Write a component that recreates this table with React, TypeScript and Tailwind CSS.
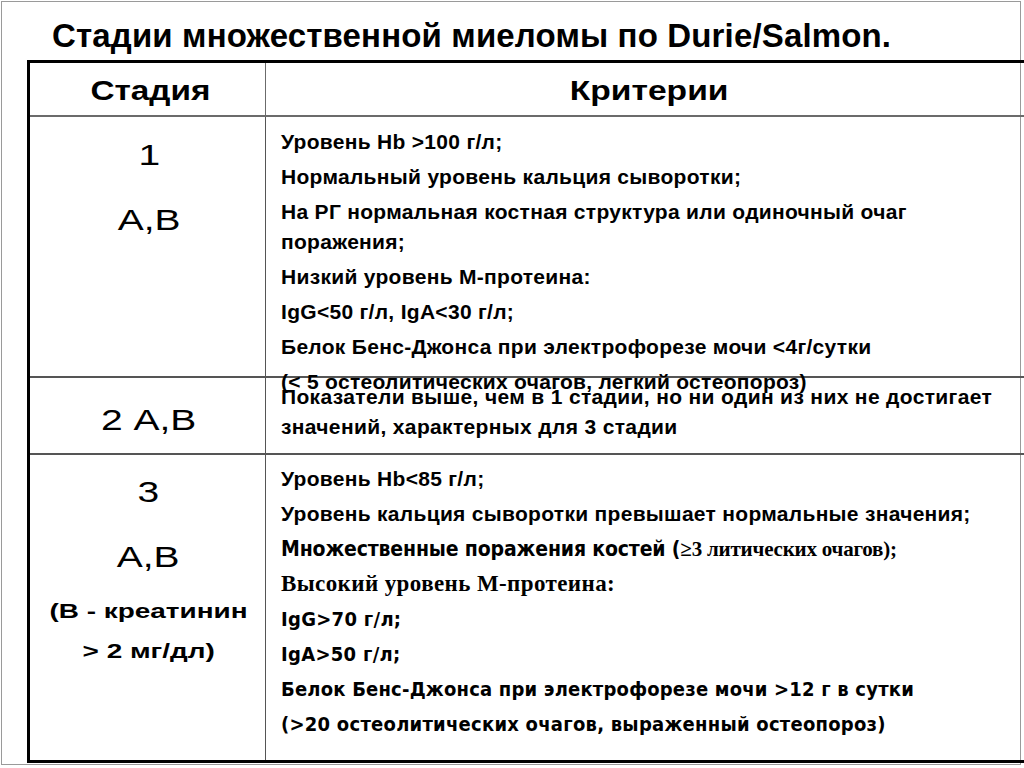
const sans = "font-['Liberation_Sans',Arial,sans-serif]";
const serif = "font-['Liberation_Serif','Times_New_Roman',serif]";
const narrow = "font-['Liberation_Sans_Narrow','Arial_Narrow','DejaVu_Sans_Condensed',sans-serif]";

// default criteria text: bold Arial-like, slightly widened
const base = "text-[21px] tracking-[0.3px]";

const Line = ({ children, type = base }: { children: React.ReactNode; type?: string }) => (
  <p className={`leading-[30px] font-bold text-black mb-[5px] ${type}`}>{children}</p>
);

export default function App() {
  return (
    <div className={`w-[1024px] h-[768px] bg-white overflow-hidden ${sans}`}>
      <div className="ml-[1px] mt-[1px] w-[1020px] h-[764px] border border-[#9a9a9a]">
        <h1 className="pl-[50px] pt-[17px] h-[58px] text-[33px] leading-none tracking-[0.15px] font-bold text-black">
          Стадии множественной миеломы по Durie/Salmon.
        </h1>
        <div className="ml-[25px] w-[998px] border-l-[3px] border-t-[3px] border-b-[3px] border-black grid grid-cols-[236px_1fr] grid-rows-[54px_261px_77px_305px]">
          {/* header */}
          <div className="border-r border-b-2 border-[#6b6b6b] flex items-center justify-center pt-[4px] pl-[6px]">
            <span className="text-[28px] font-bold scale-x-[1.19]">Стадия</span>
          </div>
          <div className="border-b-2 border-[#6b6b6b] flex items-center justify-center pt-[4px] pl-[8px]">
            <span className="text-[28px] font-bold scale-x-[1.2]">Критерии</span>
          </div>

          {/* stage 1 */}
          <div className="border-r border-b-2 border-[#555] flex flex-col items-center pt-[5px] text-[30px] leading-[65px] pl-[4px]">
            <span className="scale-x-[1.3]">1</span>
            <span className="scale-x-[1.3]">А,В</span>
          </div>
          <div className="border-b-2 border-[#555] pl-[15px] pt-[10px] h-[261px] relative z-10">
            <div className="w-[726px]">
              <Line>Уровень Hb &gt;100 г/л;</Line>
              <Line>Нормальный уровень кальция сыворотки;</Line>
              <Line>На РГ нормальная костная структура или одиночный очаг поражения;</Line>
              <Line>Низкий уровень М-протеина:</Line>
              <Line>IgG&lt;50 г/л, IgA&lt;30 г/л;</Line>
              <Line>Белок Бенс-Джонса при электрофорезе мочи &lt;4г/сутки</Line>
              <Line>(&lt; 5 остеолитических очагов, легкий остеопороз)</Line>
            </div>
          </div>

          {/* stage 2 */}
          <div className="border-r border-b-2 border-[#555] flex items-center justify-center pt-[8px] pl-[2px]">
            <span className="text-[30px] scale-x-[1.3]">2 А,В</span>
          </div>
          <div className="border-b-2 border-[#555] pl-[15px] pt-[4px]">
            <p className="text-[21px] leading-[30px] tracking-[0.35px] font-bold w-[726px]">
              Показатели выше, чем в 1 стадии, но ни один из них не достигает значений, характерных для 3 стадии
            </p>
          </div>

          {/* stage 3 */}
          <div className="border-r border-[#555] flex flex-col items-center pt-[4px] pl-[2px]">
            <span className="text-[30px] leading-[65px] scale-x-[1.3]">3</span>
            <span className="text-[30px] leading-[65px] scale-x-[1.3]">А,В</span>
            <span className="text-[21px] leading-[44px] font-bold scale-x-[1.33]">(В - креатинин</span>
            <span className="text-[21px] leading-[36px] font-bold scale-x-[1.33]">&gt; 2 мг/дл)</span>
          </div>
          <div className="pl-[15px] pt-[9px]">
            <Line>Уровень Hb&lt;85 г/л;</Line>
            <Line>Уровень кальция сыворотки превышает нормальные значения;</Line>
            <Line type={`${narrow} text-[21px] tracking-[-0.15px]`}>
              Множественные поражения костей (
              <span className={`${serif} tracking-[-0.2px]`}>≥3 литических очагов);</span>
            </Line>
            <Line type={`${serif} text-[23px] tracking-[0.4px]`}>Высокий уровень М-протеина:</Line>
            <Line type={`${narrow} text-[20px] tracking-[0.3px]`}>IgG&gt;70 г/л;</Line>
            <Line type={`${narrow} text-[20px] tracking-[0.3px]`}>IgA&gt;50 г/л;</Line>
            <Line type={`${narrow} text-[20px] tracking-[0.2px]`}>Белок Бенс-Джонса при электрофорезе мочи &gt;12 г в сутки</Line>
            <Line type={`${narrow} text-[20px] tracking-[0.25px]`}>(&gt;20 остеолитических очагов, выраженный остеопороз)</Line>
          </div>
        </div>
      </div>
    </div>
  );
}
